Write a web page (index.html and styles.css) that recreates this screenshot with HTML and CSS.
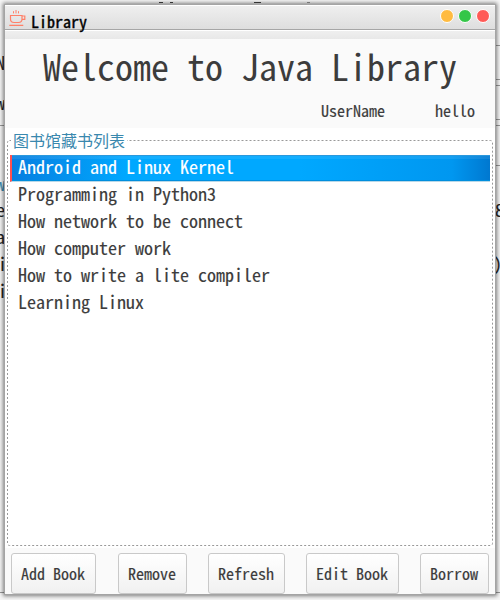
FILE: index.html
```html
<!DOCTYPE html>
<html lang="zh-CN">
<head>
<meta charset="utf-8">
<title>Library</title>
<link rel="stylesheet" href="styles.css">
</head>
<body>
<div class="desktop">
  <div class="behind" aria-hidden="true">
    <span class="frag l n">N</span>
    <span class="frag l w">w</span>
    <span class="frag l we">w</span>
    <span class="frag l e">e</span>
    <span class="frag l a">a</span>
    <span class="frag l i1">i</span>
    <span class="frag l i2">i</span>
    <span class="frag r eight">8</span>
    <span class="frag r paren">)</span>
    <i class="rule r1"></i><i class="rule r2"></i><i class="rule r3"></i><i class="rule r4"></i><i class="rule r5"></i><i class="rule r6"></i>
    <i class="rule r7"></i><i class="rule r8"></i>
    <i class="rule r9"></i>
    <i class="tick t1"></i><i class="tick t2"></i><i class="tick t3"></i><i class="tick t4"></i>
  </div>
  <main class="window">
    <header class="titlebar">
      <svg class="cup" width="18" height="18" viewBox="0 0 18 18" fill="none" stroke="#ff8068" stroke-width="1.2">
        <path d="M2.5 6.5H14V10Q14 13.5 10.5 13.5H6Q2.5 13.5 2.5 10ZM14 7H16.8V10.3H13.7M1.3 16.3H15.3"/>
        <path d="M5.5 2.2V4.4M8 1V4.4M10.5 2.2V4.4" stroke-width="1"/>
      </svg>
      <h2 class="caption">Library</h2>
      <div class="controls"><i class="dot min"></i><i class="dot max"></i><i class="dot close"></i></div>
    </header>
    <div class="menubar"></div>
    <section class="welcome">
      <h1>Welcome to Java Library</h1>
      <div class="user"><span>UserName</span><span>hello</span></div>
    </section>
    <section class="list-area">
      <svg class="outline" width="488" height="410" fill="none" stroke="#999" stroke-dasharray="2 2"><rect x="1.5" y="2.5" width="485" height="405" rx="2"/></svg>
      <div class="legend">图书馆藏书列表</div>
      <ul class="books">
        <li class="selected">Android and Linux Kernel</li>
        <li>Programming in Python3</li>
        <li>How network to be connect</li>
        <li>How computer work</li>
        <li>How to write a lite compiler</li>
        <li>Learning Linux</li>
      </ul>
    </section>
    <footer class="actions">
      <button>Add Book</button>
      <button>Remove</button>
      <button>Refresh</button>
      <button>Edit Book</button>
      <button>Borrow</button>
    </footer>
  </main>
</div>
</body>
</html>
```
FILE: styles.css
```css
* { box-sizing: border-box; }
body, h1, h2, ul { margin: 0; padding: 0; }
body {
  font-family: "Noto Sans Mono CJK SC", "DejaVu Sans Mono", "Noto Sans CJK SC", monospace;
  color: #3c3c3c;
}
.desktop {
  position: relative;
  width: 500px;
  height: 600px;
  padding: 4px 4px 5px 4px;
  overflow: hidden;
  background: #f6f6f6;
}
.behind { position: absolute; inset: 0; }
.frag { position: absolute; font-size: 18px; line-height: 20px; color: #222; -webkit-text-stroke: .15px; }
.l { right: 495px; }
.r { left: 495px; }
.n { top: 52px; }
.w { top: 92px; }
.we { top: 173px; color: #3a88ae; }
.e { top: 199px; }
.a { top: 226px; }
.i1 { top: 253px; right: 493px; }
.i2 { top: 280px; right: 493px; }
.eight { top: 199px; }
.paren { top: 253px; left: 493px; }
.rule { position: absolute; height: 1px; width: 5px; background: #999; }
.r1, .r2, .r3, .r4, .r5, .r6, .r9 { right: 0; }
.r1 { top: 45px; }
.r2 { top: 79px; }
.r3 { top: 85px; }
.r4 { top: 119px; }
.r5 { top: 125px; }
.r6 { top: 165px; }
.r9 { top: 592px; }
.r7, .r8 { left: 0; }
.r7 { top: 125px; }
.r8 { top: 592px; }
.tick { position: absolute; z-index: 2; top: 2px; height: 1px; width: 4px; background: #333; }
.t1 { left: 159px; }
.t2 { left: 170px; width: 3px; }
.t3 { left: 254px; width: 7px; }
.t4 { left: 307px; width: 3px; background: #777; }
.window {
  position: relative;
  display: flex;
  flex-direction: column;
  width: 492px;
  height: 591px;
  border: 1px solid #a4a4a4;
  background: #fafafa;
  box-shadow: 0 0 4px 1px rgba(0, 0, 0, .5);
}
.titlebar {
  display: flex;
  height: 25px;
  padding: 0 5px 0 3px;
  border-top: 1px solid #fff;
  border-bottom: 1px solid #a6a6a6;
  background: linear-gradient(#efefef, #dedede);
}
.cup { margin-top: 3px; }
.caption { position: relative; z-index: 1; margin-left: 5px; margin-top: 5px; font-size: 16px; line-height: 20px; font-weight: 400; height: 18px; color: #000; -webkit-text-stroke: .4px; }
.controls { display: flex; gap: 4px; margin: 3px 0 0 auto; }
.dot { width: 14px; height: 14px; border: 1px solid #fff; border-radius: 50%; }
.min { background: #ffbb40; }
.max { background: #34c648; }
.close { background: #ff5a56; }
.menubar { height: 9px; border-top: 1px solid #fff; background: linear-gradient(#efefef, #e8e8e8); }
.welcome { height: 89px; }
.welcome h1 { padding-left: 38px; font-size: 36px; line-height: 52px; font-weight: 400; white-space: nowrap; }
.user { display: flex; justify-content: flex-end; gap: 50px; padding: 9px 20px 0 0; font-size: 16px; line-height: 20px; -webkit-text-stroke: .15px; }
.list-area { position: relative; height: 420px; padding: 2px 5px; background: #fff; }
.outline { position: absolute; left: 1px; top: 10px; }
.legend {
  position: relative;
  width: max-content;
  height: 25px;
  margin-left: 1px;
  padding: 0 2px;
  font-size: 16px;
  line-height: 21px;
  color: #3a88ae;
  background: #fff;
}
.books { position: relative; list-style: none; -webkit-text-stroke: .15px; }
.books li { height: 27px; padding-left: 8px; font-size: 18px; line-height: 23px; }
.books .selected {
  padding-left: 6px;
  border-left: 2px solid #ff5050;
  border-bottom: 1px solid #b8d8e8;
  color: #fff;
  background: linear-gradient(rgba(255,255,255,.08) 4px, transparent 4px), linear-gradient(90deg, #077ee0, #00a8ff 24%, #00a8ff 60%, #0097f0 92%, #0078d0);
  box-shadow: inset 0 -1px #008edd, inset 0 1px #2b98dc;
}
.actions { display: flex; gap: 21px; align-items: flex-start; height: 46px; padding: 5px 0 0 6px; }
.actions button:nth-child(2) { margin-left: 1px; }
.actions button {
  flex: none;
  height: 41px;
  padding: 0 10px 0 9px;
  border: 1px solid #c9c9c9;
  border-radius: 3px;
  background: linear-gradient(#fff, #f1f1f1);
  font: 400 16px/39px "Noto Sans Mono CJK SC", "DejaVu Sans Mono", "Noto Sans CJK SC", monospace;
  -webkit-text-stroke: .15px;
  white-space: nowrap;
  color: #3c3c3c;
}
```
